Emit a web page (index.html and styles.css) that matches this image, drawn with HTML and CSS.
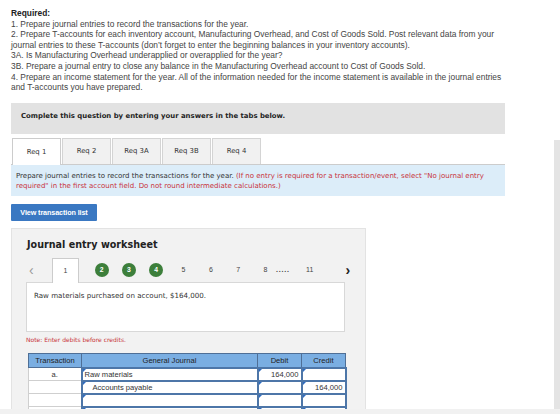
FILE: index.html
```html
<!DOCTYPE html>
<html lang="en">
<head>
<meta charset="UTF-8" />
<meta name="viewport" content="width=device-width, initial-scale=1" />
<title>Journal entry worksheet</title>
<link rel="stylesheet" href="styles.css">
</head>
<body>

<div class="required">
  <b>Required:</b><br>
  1. Prepare journal entries to record the transactions for the year.<br>
  2. Prepare T-accounts for each inventory account, Manufacturing Overhead, and Cost of Goods Sold. Post relevant data from your journal entries to these T-accounts (don’t forget to enter the beginning balances in your inventory accounts).<br>
  3A. Is Manufacturing Overhead underapplied or overapplied for the year?<br>
  3B. Prepare a journal entry to close any balance in the Manufacturing Overhead account to Cost of Goods Sold.<br>
  4. Prepare an income statement for the year. All of the information needed for the income statement is available in the journal entries and T-accounts you have prepared.
</div>

<div class="prompt">Complete this question by entering your answers in the tabs below.</div>

<div class="tabs">
  <div class="tab active">Req 1</div>
  <div class="tab">Req 2</div>
  <div class="tab">Req 3A</div>
  <div class="tab">Req 3B</div>
  <div class="tab">Req 4</div>
</div>

<div class="info">
  Prepare journal entries to record the transactions for the year. <span class="red">(If no entry is required for a transaction/event, select "No journal entry required" in the first account field. Do not round intermediate calculations.)</span>
</div>

<button class="btn">View transaction list</button>

<div class="panel">
  <h2>Journal entry worksheet</h2>

  <div class="steps">
    <span class="arrow dim">&lsaquo;</span>
    <span class="step current">1</span>
    <span class="step done first"><i>2</i></span>
    <span class="step done"><i>3</i></span>
    <span class="step done"><i>4</i></span>
    <span class="step">5</span>
    <span class="step">6</span>
    <span class="step">7</span>
    <span class="step">8</span>
    <span class="dots">.....</span>
    <span class="step">11</span>
    <span class="arrow next">&rsaquo;</span>
  </div>

  <div class="desc">Raw materials purchased on account, $164,000.</div>

  <div class="note">Note: Enter debits before credits.</div>

  <table class="journal">
    <tr>
      <th class="c-tr">Transaction</th>
      <th class="c-gj">General Journal</th>
      <th class="c-db">Debit</th>
      <th class="c-cr">Credit</th>
    </tr>
    <tr>
      <td class="tr">a.</td>
      <td class="in">Raw materials</td>
      <td class="in num">164,000</td>
      <td class="in num"></td>
    </tr>
    <tr>
      <td class="tr"></td>
      <td class="in indent">Accounts payable</td>
      <td class="in num"></td>
      <td class="in num">164,000</td>
    </tr>
    <tr>
      <td class="tr"></td>
      <td class="in"></td>
      <td class="in num"></td>
      <td class="in num"></td>
    </tr>
    <tr>
      <td class="tr"></td>
      <td class="in"></td>
      <td class="in num"></td>
      <td class="in num"></td>
    </tr>
  </table>
</div>

<div class="scroll-v"></div>
<div class="scroll-h"></div>

</body>
</html>
```

FILE: styles.css
```css
body { margin: 0; padding: 8px 55px 0 11px; background: #fff; color: #333; font-family: "Liberation Sans", Arial, sans-serif; overflow: hidden; }

.required { font-size: 8.4px; line-height: 10.6px; color: #444; }
.required b { color: #222; }

.prompt { margin-top: 10px; background: #e2e2e2; height: 31px; box-sizing: border-box; padding: 9px 10px 0; font-family: "DejaVu Sans", Verdana, sans-serif; font-weight: bold; font-size: 6.9px; color: #222; }

.tabs { display: flex; gap: 1px; margin-top: 4px; padding-left: 1px; border-bottom: 1px solid #ccc; }
.tab { width: 49px; height: 26px; box-sizing: border-box; display: flex; align-items: center; justify-content: center; background: #f1f1f1; border: 1px solid #d4d4d4; border-bottom: none; font-family: "DejaVu Sans", Verdana, sans-serif; font-size: 6.9px; color: #333; }
.tab.active { background: #fff; border-color: #ccc; height: 27px; margin-bottom: -1px; }

.info { background: #dcedf9; padding: 6px 5px 5px; font-family: "DejaVu Sans", Verdana, sans-serif; font-size: 7px; line-height: 10px; color: #333; }
.red { color: #c8323a; }

.btn { display: block; margin-top: 8px; width: 86px; height: 17px; padding: 0; border: none; border-radius: 1px; background: #3a78c2; color: #fff; font-family: "Liberation Sans", Arial, sans-serif; font-weight: bold; font-size: 7.2px; letter-spacing: -0.1px; }

.panel { margin-top: 7px; width: 355px; box-sizing: border-box; background: #f2f2f2; border: 1px solid #e3e3e3; border-bottom: none; padding: 9px 20px 30px 14px; }
.panel h2 { margin: 0 0 0 1px; font-family: "DejaVu Sans", Verdana, sans-serif; font-size: 9.6px; font-weight: bold; color: #222; line-height: 14px; }

.steps { display: flex; align-items: center; height: 24px; margin-top: 6px; font-family: "Liberation Sans", Arial, sans-serif; font-size: 7px; color: #444; }
.steps > span { flex-shrink: 0; }
.arrow { width: 26px; padding-left: 3px; box-sizing: border-box; font-size: 14px; color: #222; font-weight: bold; line-height: 10px; }
.arrow.dim { color: #999; font-weight: normal; }
.arrow.next { margin-left: 19px; }
.step { width: 27.3px; height: 24px; display: flex; align-items: center; justify-content: center; }
.step.current { width: 27px; background: #fff; border: 1px solid #ccc; border-bottom: none; box-sizing: border-box; height: 25px; margin-bottom: -1px; }
.step.first { margin-left: 9px; }
.step.done i { width: 14px; height: 14px; border-radius: 50%; background: #3d7f3b; color: #fff; font-style: normal; font-weight: bold; font-size: 6.8px; display: flex; align-items: center; justify-content: center; }
.dots { width: 20px; margin-left: -3px; letter-spacing: 0.8px; font-weight: bold; }

.desc { background: #fff; border: 1px solid #d8d8d8; height: 50px; box-sizing: border-box; padding: 8px 7px; font-family: "DejaVu Sans", Verdana, sans-serif; font-size: 7.1px; color: #333; }

.note { margin-top: 4px; font-family: "DejaVu Sans", Verdana, sans-serif; font-size: 6px; color: #c8323a; }

.journal { margin: 10px 0 0 2px; border-collapse: collapse; width: 313px; table-layout: fixed; font-family: "Liberation Sans", Arial, sans-serif; font-size: 7.6px; color: #333; }
.journal th { background: #7aaee2; border: 1px solid #4f6f96; height: 13px; padding: 0; font-weight: normal; color: #222; }
.c-tr { width: 52px; }
.c-gj { width: 175px; }
.c-db { width: 43px; }
.c-cr { width: 43px; }
.journal td { height: 11px; padding: 0 2px; border: 1px solid #d6d6d6; background: #fff; line-height: 9px; overflow: hidden; white-space: nowrap; }
.journal td.tr { text-align: center; border-color: #cfcfcf; }
.journal td.in { border: 2px solid #4d76a8; position: relative; padding-left: 2px; }
.journal td.in::before { content: ""; position: absolute; left: 0; top: 0; border-top: 3px solid #2f6cc0; border-right: 3px solid transparent; }
.journal td.num { text-align: right; }
.journal td.indent { padding-left: 10px; }

.scroll-v { position: fixed; right: 0; top: 140px; bottom: 0; width: 6px; background: #e4e4e4; }
.scroll-h { position: fixed; left: 0; right: 0; bottom: 0; height: 5px; background: #f1f1f1; }
```
